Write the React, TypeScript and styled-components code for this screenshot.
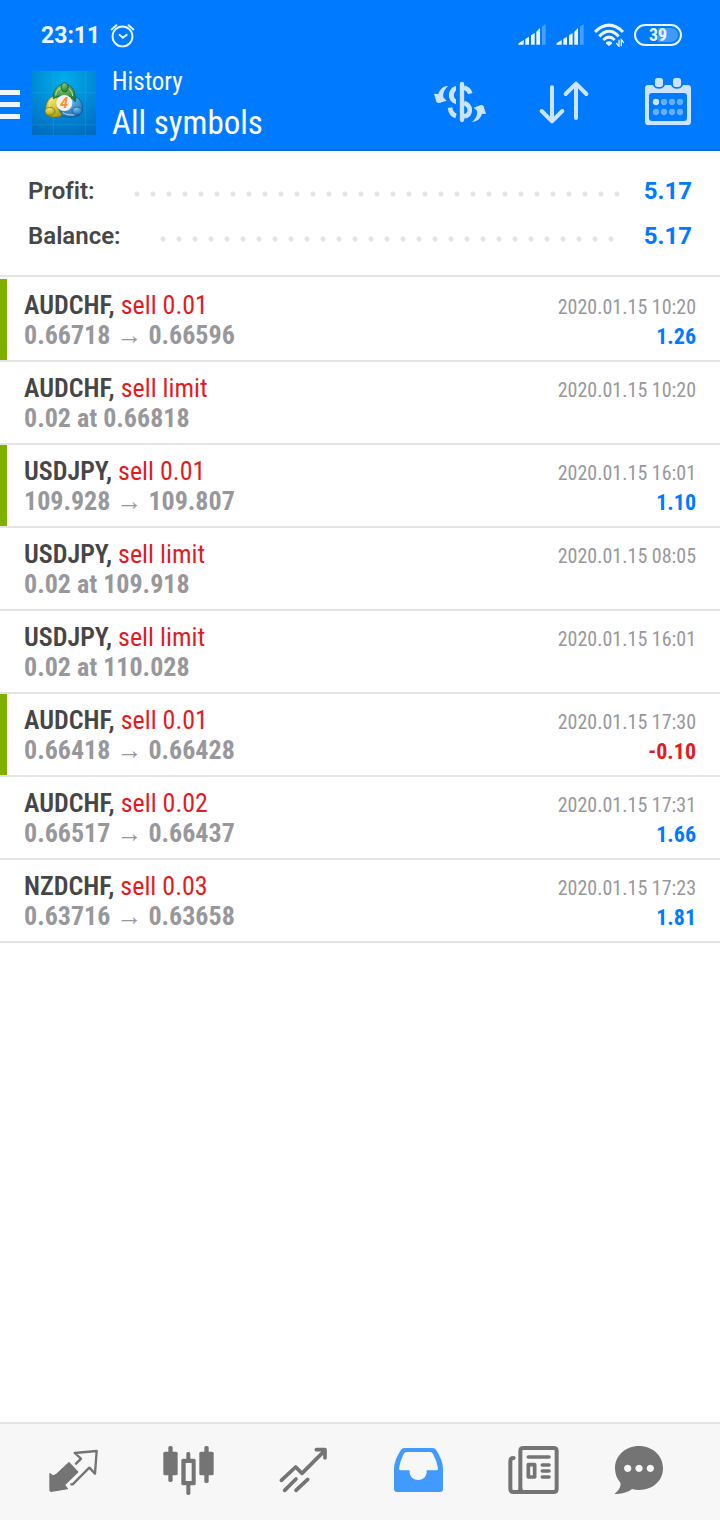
import React from "react";
import styled, { createGlobalStyle } from "styled-components";

const color = {
  brand: "#007aff",
  brandEdge: "#006be0",
  onBrand: "#cce4ff",
  onBrandStrong: "#ebf5ff",
  ink: "#464646",
  muted: "#98989c",
  line: "#e4e4e4",
  sell: "#e31b1f",
  marker: "#7fb000",
  nav: "#f7f7f7",
  navIcon: "#747474",
  navActive: "#419bff",
};

const condensed = `"Roboto Condensed", "Liberation Sans Narrow", Roboto, sans-serif`;

const GlobalStyle = createGlobalStyle`
  *, *::before, *::after { box-sizing: border-box; }
  body { margin: 0; background: #fff; font-family: Roboto, sans-serif; font-variant-ligatures: none; color: ${color.ink}; }
  button { padding: 0; border: 0; background: none; font: inherit; color: inherit; cursor: pointer; }
  svg { display: block; }
`;

const Page = styled.div`
  display: flex;
  flex-direction: column;
  min-height: 100vh;
`;

const Header = styled.header`
  background: ${color.brand};
  border-bottom: 2px solid ${color.brandEdge};
`;

const StatusBar = styled.div`
  display: flex;
  align-items: center;
  justify-content: space-between;
  height: 55px;
  padding: 15px 38px 0 41px;
  color: ${color.onBrandStrong};
`;

const StatusGroup = styled.div`
  display: flex;
  align-items: center;
  gap: 10px;
`;

const Clock = styled.span`
  font-size: 23px;
  line-height: 25px;
  font-weight: 700;
`;

const Toolbar = styled.div`
  display: flex;
  height: 94px;
`;

const MenuButton = styled.button`
  display: flex;
  flex-direction: column;
  justify-content: center;
  gap: 7px;
  width: 32px;
  padding-top: 4px;
`;

const MenuLine = styled.span`
  width: 20px;
  height: 5px;
  background: ${color.onBrandStrong};
`;

const Logo = styled.svg`
  width: 64px;
  height: 64px;
  margin-top: 16px;
  flex: none;
`;

const Titles = styled.div`
  flex: 1;
  min-width: 0;
  padding: 9px 0 0 16px;
  color: #fff;
  font-family: ${condensed};
`;

const Section = styled.p`
  margin: 0;
  font-size: 25px;
  line-height: 36px;
`;

const Title = styled.h1`
  margin: 0;
  font-size: 33px;
  line-height: 46px;
  font-weight: 400;
  white-space: nowrap;
`;

const ActionButton = styled.button`
  width: 104px;
  flex: none;
  color: ${color.onBrand};
`;

const Main = styled.main`
  flex: 1;
`;

const Summary = styled.dl`
  margin: 0 0 2px;
  padding: 17px 28px 17px;
  border-bottom: 2px solid ${color.line};
`;

const SummaryRow = styled.div`
  display: flex;
  align-items: center;
  height: 45px;
  font-size: 24px;
`;

const SummaryLabel = styled.dt`
  font-weight: 600;
`;

const Dots = styled.span`
  flex: 1;
  height: 6px;
  margin: 6px 21px 0 34px;
  background: radial-gradient(circle, ${color.line} 2px, transparent 3px) 0 0 / 16px 6px repeat-x;
`;

const SummaryValue = styled.dd`
  margin: 0;
  font-weight: 700;
  color: ${color.brand};
`;

const DealList = styled.ul`
  margin: 0;
  padding: 0;
  list-style: none;
  font-family: ${condensed};
`;

const Deal = styled.li<{ $marked: boolean }>`
  display: grid;
  grid-template-columns: 1fr auto;
  grid-template-rows: 30px 30px;
  align-items: baseline;
  padding: 11px 24px 10px 17px;
  border-left: 7px solid ${(p) => (p.$marked ? color.marker : "transparent")};
  font-size: 26px;
  line-height: 30px;
  box-shadow: 0 2px 0 ${color.line};
  margin-bottom: 2px;
`;

const Symbol = styled.span`
  font-weight: 600;
`;

const Side = styled.span`
  color: ${color.sell};
`;

const Prices = styled.span`
  font-weight: 700;
  color: ${color.muted};
`;

const DealTime = styled.time`
  font-size: 20px;
  text-align: right;
  color: ${color.muted};
`;

const DealProfit = styled.span<{ $loss: boolean }>`
  font-size: 22px;
  font-weight: 700;
  text-align: right;
  color: ${(p) => (p.$loss ? color.sell : color.brand)};
`;

const BottomNav = styled.nav`
  display: flex;
  height: 98px;
  padding: 0 14px 0 16px;
  background: ${color.nav};
  border-top: 2px solid ${color.line};
`;

const NavButton = styled.button<{ $active?: boolean }>`
  display: flex;
  flex: 1;
  align-items: center;
  justify-content: center;
  color: ${(p) => (p.$active ? color.navActive : color.navIcon)};
`;

const AlarmIcon = () => (
  <svg width="25" height="25" viewBox="0 0 78 78" fill="none" stroke="currentColor" strokeWidth="6" strokeLinecap="round" strokeLinejoin="round">
    <circle cx="39" cy="42" r="31" />
    <path d="M5 20 20 7M73 20 58 7M30 37l10 9 12-9" />
  </svg>
);

const SignalIcon = () => (
  <svg width="28" height="22" viewBox="0 0 84 66" fill="currentColor">
    <path d="M0 62 3 57 17 48V62ZM22 45 33 38V62H22ZM39 34 50 27V62H39ZM55 23 66 12V62H55Z" />
    <path d="M72 7 83 1V62H72Z" opacity=".3" />
  </svg>
);

const WifiIcon = () => (
  <svg width="30" height="24" viewBox="0 0 90 72" fill="none" stroke="currentColor" strokeWidth="9">
    <path d="M3 27Q45-14 87 27M16 40Q45 10 74 40M28 51Q45 34 62 51" />
    <path d="M36 58Q45 52 54 58L54 62 45 69 36 62Z" fill="currentColor" stroke="none" />
    <path d="M75 50V70L67 60M82 70V50L90 60" strokeWidth="4" />
  </svg>
);

const BatteryFrame = styled.span`
  display: flex;
  align-items: center;
  justify-content: center;
  width: 48px;
  height: 22px;
  padding: 2px;
  border: 2px solid currentColor;
  border-radius: 11px;
  background: linear-gradient(90deg, transparent 50%, #409bff 50%) content-box;
  font-family: ${condensed};
  font-size: 18px;
  font-weight: 700;
  line-height: 18px;
`;

const LogoMark = () => (
  <Logo viewBox="24 27 192 192" role="img" aria-label="MetaTrader 4">
    <defs>
      <radialGradient id="sky" cx=".5" cy=".15" r="1">
        <stop offset="0" stopColor="#00aeea" />
        <stop offset=".5" stopColor="#008ad6" />
        <stop offset="1" stopColor="#0066bb" />
      </radialGradient>
      <radialGradient id="green" cx=".4" cy=".2" r=".9">
        <stop offset="0" stopColor="#86c56c" />
        <stop offset="1" stopColor="#16752f" />
      </radialGradient>
      <radialGradient id="yellow" cx=".4" cy=".2" r=".9">
        <stop offset="0" stopColor="#efe36a" />
        <stop offset="1" stopColor="#a79a10" />
      </radialGradient>
      <radialGradient id="blue" cx=".4" cy=".2" r=".9">
        <stop offset="0" stopColor="#6cc4f2" />
        <stop offset="1" stopColor="#1265ac" />
      </radialGradient>
    </defs>
    <path d="M24 27H216V219H24Z" fill="url(#sky)" />
    <path d="M24 92H216M24 188H216M88 27V219M184 27V219" stroke="#48b4ea" strokeOpacity=".35" strokeWidth="2" />
    <g strokeLinejoin="round">
      <path d="M106 160C114 140 140 104 156 105C176 112 182 144 168 158C150 169 122 168 106 160Z" fill="url(#blue)" stroke="#0e4f8c" strokeWidth="2" />
      <path d="M116 152C132 161 156 162 170 150" fill="none" stroke="#bce4fb" strokeWidth="3" />
      <path d="M86 103C66 112 60 144 68 158C82 168 104 168 114 160L104 142 104 108Z" fill="url(#yellow)" stroke="#756d0c" strokeWidth="2" />
      <path d="M76 136C74 122 80 110 90 107" fill="none" stroke="#f6efa0" strokeWidth="3" />
      <path d="M88 110C84 84 104 66 122 67C144 68 156 86 154 120L140 104 104 102Z" fill="url(#green)" stroke="#125826" strokeWidth="2" />
      <path d="M95 100C96 84 108 76 121 76C136 77 145 88 146 102" fill="none" stroke="#c5e6b8" strokeWidth="3" />
    </g>
    <ellipse cx="122" cy="76" rx="11" ry="14" fill="url(#green)" stroke="#125826" strokeWidth="2" />
    <ellipse cx="78" cy="148" rx="15" ry="12" fill="url(#yellow)" stroke="#756d0c" strokeWidth="2" />
    <ellipse cx="159" cy="147" rx="15" ry="12" fill="url(#blue)" stroke="#0e4f8c" strokeWidth="2" />
    <circle cx="121" cy="123" r="24" fill="#f5f1ec" />
    <text x="120" y="138" textAnchor="middle" fontFamily="Roboto, sans-serif" fontSize="44" fontWeight="700" fontStyle="italic" fill="#f5913a">
      4
    </text>
  </Logo>
);

const CurrencyIcon = () => (
  <svg width="104" height="96" viewBox="-36 -15 312 288" fill="none" stroke="currentColor">
    <path d="M126 72V180" strokeWidth="13" strokeLinecap="round" />
    <path d="M108 78C80 84 80 126 108 132V118C100 114 100 96 108 92Z" fill="currentColor" stroke="none" />
    <path d="M132 83C142 85 148 91 151 101M132 129C155 137 155 165 132 169" strokeWidth="14" />
    <path d="M90 143C92 158 98 165 108 168" strokeWidth="14" />
    <path d="M84 78C72 78 60 86 55 102L42 101 49 125Q52 130 58 129L80 122 70 112C68 98 74 88 84 78Z" fill="currentColor" stroke="none" />
    <path d="M156 186C170 185 182 176 186 161L198 162 191 139Q188 134 182 135L161 143 171 152C173 166 166 178 156 186Z" fill="currentColor" stroke="none" />
  </svg>
);

const SortIcon = () => (
  <svg width="104" height="96" viewBox="276 -15 312 288" fill="none" stroke="currentColor" strokeWidth="12" strokeLinecap="round" strokeLinejoin="round">
    <path d="M396 82V182M365 153 396 184 427 153M468 174V72M437 102 468 71 499 102" />
  </svg>
);

const CalendarIcon = () => (
  <svg width="104" height="96" viewBox="588 -15 312 288" fill="currentColor">
    <path
      fillRule="evenodd"
      d="M685 75H699Q703 86 717 86T735 75H753Q757 86 771 86T789 75H803Q813 75 813 85V185Q813 195 803 195H685Q675 195 675 185V85Q675 75 685 75ZM696 99Q687 99 687 108V174Q687 183 696 183H792Q801 183 801 174V108Q801 99 792 99Z"
    />
    <rect x="705" y="54" width="24" height="27" rx="8" />
    <rect x="759" y="54" width="24" height="27" rx="8" />
    <circle cx="708" cy="126" r="9.500" />
    <g opacity=".5">
      <circle cx="732" cy="126" r="9.500" />
      <circle cx="756" cy="126" r="9.500" />
      <circle cx="780" cy="126" r="9.500" />
      <circle cx="708" cy="156" r="9.500" />
      <circle cx="732" cy="156" r="9.500" />
      <circle cx="756" cy="156" r="9.500" />
      <circle cx="780" cy="156" r="9.500" />
    </g>
  </svg>
);

const QuotesIcon = () => (
  <svg width="75" height="64" viewBox="18 75 225 192" fill="none" stroke="currentColor" strokeWidth="7" strokeLinejoin="round">
    <path d="M60 176 68 183 80 178 117 143 143 171 103 210 112 221 63 229 60 226Z" fill="currentColor" strokeWidth="4" />
    <path d="M121 208H128L178 158 195 176 200 108 134 114 153 131 136 148" />
  </svg>
);

const ChartIcon = () => (
  <svg width="75" height="64" viewBox="363 75 225 192" fill="currentColor">
    <rect x="400" y="110" width="43" height="71" rx="5" />
    <rect x="415" y="93" width="13" height="108" rx="5" />
    <rect x="508" y="110" width="43" height="71" rx="5" />
    <rect x="523" y="93" width="13" height="111" rx="5" />
    <rect x="469" y="111" width="12" height="25" rx="5" />
    <rect x="469" y="202" width="12" height="38" rx="5" />
    <path fillRule="evenodd" d="M459 131H492Q497 131 497 136V206Q497 211 492 211H459Q454 211 454 206V136Q454 131 459 131ZM467 144V198H485V144Z" />
  </svg>
);

const TradeIcon = () => (
  <svg width="75" height="64" viewBox="18 75 225 192" fill="none" stroke="currentColor" strokeWidth="11" strokeLinecap="round" strokeLinejoin="round">
    <path d="M64 196 107 156 126 175 194 107M169 104H195V129M74 226 108 192M108 226 143 193" />
  </svg>
);

const HistoryIcon = () => (
  <svg width="75" height="64" viewBox="363 75 225 192" fill="currentColor">
    <path
      fillRule="evenodd"
      d="M434 99H517Q525 99 529 106Q549 138 549 160V222Q549 231 540 231H411Q402 231 402 222V160Q402 138 422 106Q426 99 434 99ZM440 111Q434 111 431 117Q420 138 417 160Q416 166 422 166H449V170C449 203 500 203 500 170V166H529Q535 166 534 160Q531 138 519 117Q516 111 510 111Z"
    />
  </svg>
);

const NewsIcon = () => (
  <svg width="75" height="64" viewBox="18 75 225 192" fill="none" stroke="currentColor" strokeWidth="12" strokeLinecap="round" strokeLinejoin="round">
    <path d="M100 99H191Q200 99 200 108V222Q200 231 191 231H71Q61 231 61 221V138Q61 129 71 129M91 224V108Q91 99 100 99M91 222Q91 231 82 231" />
    <path d="M91 220Q93 231 104 231" strokeWidth="10" />
    <path d="M115 126H177M157 150H177M157 168H177M157 186H177" strokeWidth="11" />
    <path d="M115 149H134V186H115Z" strokeWidth="11" />
  </svg>
);

const MessagesIcon = () => (
  <svg width="75" height="64" viewBox="363 75 225 192" fill="currentColor">
    <path
      fillRule="evenodd"
      d="M447 93C488 93 519 122 519 160C519 198 488 225 447 225C440 225 433 224 426 222C414 232 394 237 376 237C375 237 374 235 376 234C387 225 394 213 391 203C381 192 375 177 375 160C375 122 406 93 447 93ZM413 149a11 11 0 1 0 .1 0ZM447 149a11 11 0 1 0 .1 0ZM481 149a11 11 0 1 0 .1 0Z"
    />
  </svg>
);

type DealItem = {
  symbol: string;
  side: string;
  prices: string;
  time: string;
  profit?: string;
  marked?: boolean;
};

const deals: DealItem[] = [
  { symbol: "AUDCHF", side: "sell 0.01", prices: "0.66718 → 0.66596", time: "2020.01.15 10:20", profit: "1.26", marked: true },
  { symbol: "AUDCHF", side: "sell limit", prices: "0.02 at 0.66818", time: "2020.01.15 10:20" },
  { symbol: "USDJPY", side: "sell 0.01", prices: "109.928 → 109.807", time: "2020.01.15 16:01", profit: "1.10", marked: true },
  { symbol: "USDJPY", side: "sell limit", prices: "0.02 at 109.918", time: "2020.01.15 08:05" },
  { symbol: "USDJPY", side: "sell limit", prices: "0.02 at 110.028", time: "2020.01.15 16:01" },
  { symbol: "AUDCHF", side: "sell 0.01", prices: "0.66418 → 0.66428", time: "2020.01.15 17:30", profit: "-0.10", marked: true },
  { symbol: "AUDCHF", side: "sell 0.02", prices: "0.66517 → 0.66437", time: "2020.01.15 17:31", profit: "1.66" },
  { symbol: "NZDCHF", side: "sell 0.03", prices: "0.63716 → 0.63658", time: "2020.01.15 17:23", profit: "1.81" },
];

const totals = [
  { label: "Profit:", value: "5.17" },
  { label: "Balance:", value: "5.17" },
];

export default function App() {
  return (
    <Page>
      <GlobalStyle />
      <Header>
        <StatusBar>
          <StatusGroup>
            <Clock>23:11</Clock>
            <AlarmIcon />
          </StatusGroup>
          <StatusGroup>
            <SignalIcon />
            <SignalIcon />
            <WifiIcon />
            <BatteryFrame>39</BatteryFrame>
          </StatusGroup>
        </StatusBar>
        <Toolbar>
          <MenuButton aria-label="Menu">
            <MenuLine />
            <MenuLine />
            <MenuLine />
          </MenuButton>
          <LogoMark />
          <Titles>
            <Section>History</Section>
            <Title>All symbols</Title>
          </Titles>
          <ActionButton aria-label="Filter by symbol">
            <CurrencyIcon />
          </ActionButton>
          <ActionButton aria-label="Sort">
            <SortIcon />
          </ActionButton>
          <ActionButton aria-label="Period">
            <CalendarIcon />
          </ActionButton>
        </Toolbar>
      </Header>
      <Main>
        <Summary>
          {totals.map((total) => (
            <SummaryRow key={total.label}>
              <SummaryLabel>{total.label}</SummaryLabel>
              <Dots aria-hidden="true" />
              <SummaryValue>{total.value}</SummaryValue>
            </SummaryRow>
          ))}
        </Summary>
        <DealList>
          {deals.map((deal, index) => (
            <Deal key={index} $marked={Boolean(deal.marked)}>
              <span>
                <Symbol>{deal.symbol},</Symbol> <Side>{deal.side}</Side>
              </span>
              <DealTime>{deal.time}</DealTime>
              <Prices>{deal.prices}</Prices>
              {deal.profit && <DealProfit $loss={deal.profit.startsWith("-")}>{deal.profit}</DealProfit>}
            </Deal>
          ))}
        </DealList>
      </Main>
      <BottomNav aria-label="Main">
        <NavButton aria-label="Quotes">
          <QuotesIcon />
        </NavButton>
        <NavButton aria-label="Charts">
          <ChartIcon />
        </NavButton>
        <NavButton aria-label="Trade">
          <TradeIcon />
        </NavButton>
        <NavButton aria-label="History" aria-current="page" $active>
          <HistoryIcon />
        </NavButton>
        <NavButton aria-label="News">
          <NewsIcon />
        </NavButton>
        <NavButton aria-label="Messages">
          <MessagesIcon />
        </NavButton>
      </BottomNav>
    </Page>
  );
}
